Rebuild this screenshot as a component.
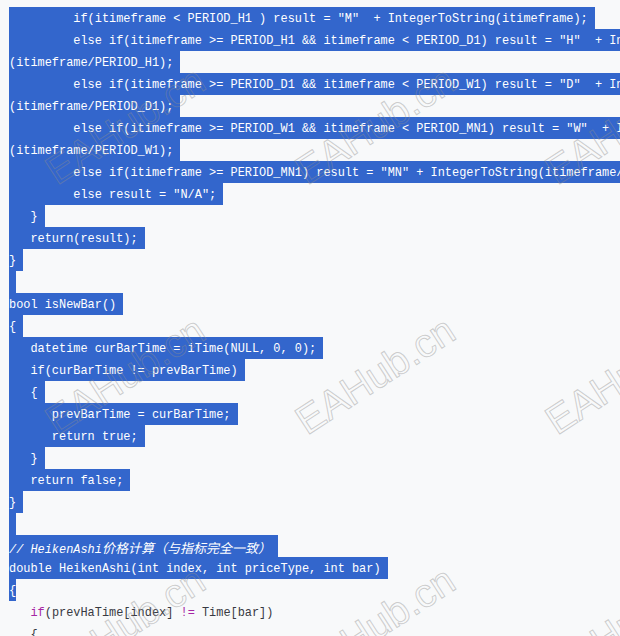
import React from "react";

const I3 = "   ";
const I6 = "      ";
const I9 = "         ";

const lines = [
  { t: I9 + 'if(itimeframe < PERIOD_H1 ) result = "M"  + IntegerToString(itimeframe);', s: true },
  { t: I9 + 'else if(itimeframe >= PERIOD_H1 && itimeframe < PERIOD_D1) result = "H"  + IntegerToString', s: true },
  { t: "(itimeframe/PERIOD_H1);", s: true },
  { t: I9 + 'else if(itimeframe >= PERIOD_D1 && itimeframe < PERIOD_W1) result = "D"  + IntegerToString', s: true },
  { t: "(itimeframe/PERIOD_D1);", s: true },
  { t: I9 + 'else if(itimeframe >= PERIOD_W1 && itimeframe < PERIOD_MN1) result = "W"  + IntegerToString', s: true },
  { t: "(itimeframe/PERIOD_W1);", s: true },
  { t: I9 + 'else if(itimeframe >= PERIOD_MN1) result = "MN" + IntegerToString(itimeframe/PERIOD_MN1);', s: true },
  { t: I9 + 'else result = "N/A";', s: true },
  { t: I3 + "}", s: true },
  { t: I3 + "return(result);", s: true },
  { t: "}", s: true },
  { t: "", s: true },
  { t: "bool isNewBar()", s: true },
  { t: "{", s: true },
  { t: I3 + "datetime curBarTime = iTime(NULL, 0, 0);", s: true },
  { t: I3 + "if(curBarTime != prevBarTime)", s: true },
  { t: I3 + "{", s: true },
  { t: I6 + "prevBarTime = curBarTime;", s: true },
  { t: I6 + "return true;", s: true },
  { t: I3 + "}", s: true },
  { t: I3 + "return false;", s: true },
  { t: "}", s: true },
  { t: "", s: true },
  { t: "__COMMENT__", s: true },
  { t: "double HeikenAshi(int index, int priceType, int bar)", s: true },
  { t: "{", s: true, last: true },
];

function Watermarks() {
  const items = [];
  for (let r = 0; r < 3; r++) {
    for (let c = 0; c < 3; c++) {
      const cx = 125 + c * 250;
      const cy = 125 + r * 250;
      items.push(
        <text
          key={`${r}-${c}`}
          x={cx}
          y={cy}
          textAnchor="middle"
          dominantBaseline="central"
          transform={`rotate(-33 ${cx} ${cy})`}
          fontFamily="'Liberation Sans', Arial, sans-serif"
          fontSize="40"
          fill="none"
          stroke="rgba(140,140,140,0.42)"
          strokeWidth="1"
        >
          EAHub.cn
        </text>
      );
    }
  }
  return (
    <svg
      className="absolute inset-0 pointer-events-none"
      width="620"
      height="636"
      viewBox="0 0 620 636"
    >
      {items}
    </svg>
  );
}

export default function App() {
  return (
    <div className="relative w-[620px] h-[636px] overflow-hidden bg-[#f8f9fa]">
      <div className="pt-[7px] pl-[9px] font-['Liberation_Mono',monospace] text-[11.92px] whitespace-pre">
        {lines.map((l, i) => {
          if (l.t === "__COMMENT__") {
            return (
              <div key={i} className="h-[22px] leading-[25px] w-max bg-[#3366cc] text-white italic">
                {"// HeikenAshi"}
                <span className="font-['Noto_Sans_CJK_SC',sans-serif] text-[13px]">价格计算（与指标完全一致）</span>
                {" "}
              </div>
            );
          }
          return (
            <div key={i} className="h-[22px] leading-[25px] w-max bg-[#3366cc] text-white">
              {l.last ? l.t : l.t + " "}
            </div>
          );
        })}
        <div className="h-[22px] leading-[25px] text-[#383a42]">
          {I3}
          <span className="text-[#a626a4]">if</span>
          {"(prevHaTime[index] "}
          <span className="text-[#a626a4]">!=</span>
          {" Time[bar])"}
        </div>
        <div className="h-[22px] leading-[25px] text-[#383a42]">{I3 + "{"}</div>
      </div>
      <Watermarks />
    </div>
  );
}
